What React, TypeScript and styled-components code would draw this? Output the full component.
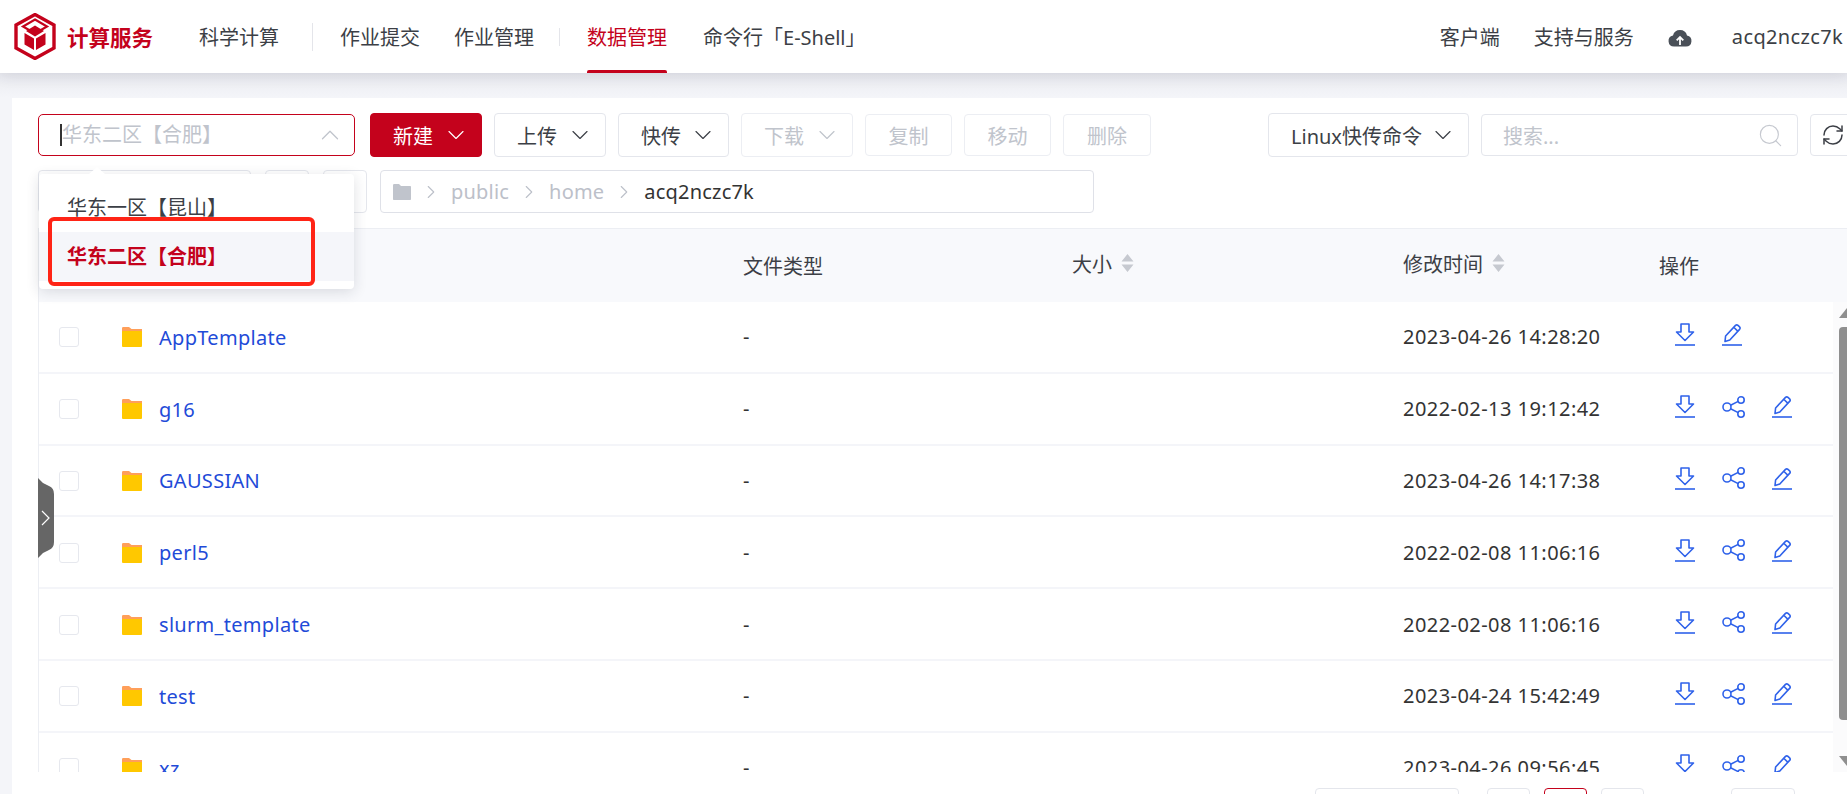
import React, { FC } from 'react';
import styled, { createGlobalStyle } from 'styled-components';
import { ChevronDown, ChevronRight, ChevronUp, RefreshCw, Search } from 'lucide-react';

const GlobalStyle = createGlobalStyle`
  html, body {
    margin: 0;
    padding: 0;
    height: 100%;
    overflow: hidden;
    background: #f4f5f9;
  }
  * {
    box-sizing: border-box;
  }
  body {
    font-family: 'Noto Sans', 'Noto Sans CJK SC', sans-serif;
    color: #333;
  }
`;

const Page = styled.div`
  position: relative;
  display: flex;
  flex-direction: column;
  height: 794px;
  overflow: hidden;
`;

/* header */
const Header = styled.header`
  display: flex;
  flex: none;
  align-items: center;
  height: 73px;
  padding: 0 4px 0 14px;
  background: #fff;
  box-shadow: 0 2px 14px rgba(40, 45, 70, 0.12);
  z-index: 1;
`;

const LogoText = styled.span`
  margin: 0 46px 0 11px;
  font-size: 21.5px;
  font-weight: 700;
  color: #c4021c;
  white-space: nowrap;
`;

const NavItem = styled.a<{ $active?: boolean }>`
  position: relative;
  display: flex;
  align-items: center;
  height: 73px;
  margin-right: ${(props) => (props.$active ? '36px' : '34px')};
  font-size: 20px;
  color: ${(props) => (props.$active ? '#c4021c' : '#3c3f46')};
  white-space: nowrap;

  ${(props) =>
    props.$active &&
    `
    &::after {
      content: '';
      position: absolute;
      left: 0;
      right: 0;
      bottom: 0;
      height: 3px;
      border-radius: 2px 2px 0 0;
      background: #c4021c;
    }
  `}
`;

const NavDivider = styled.span<{ $short?: boolean }>`
  width: 1px;
  height: ${(props) => (props.$short ? '18px' : '28px')};
  margin: ${(props) => (props.$short ? '0 27px 0 -9px' : '0 27px 0 -1px')};
  background: #e4e5ea;
`;

const HeaderRight = styled.div`
  display: flex;
  align-items: center;
  gap: 34px;
  margin-left: auto;
  font-size: 20px;
  color: #3c3f46;
  white-space: nowrap;
`;

const UserName = styled.span`
  margin-left: 6px;
  letter-spacing: 0.35px;
`;

/* card */
const Main = styled.main`
  display: flex;
  flex: 1;
  min-height: 0;
  padding: 25px 0 0 12px;
  background: linear-gradient(#e9eaef, #f4f5f9 24px);
`;

const Card = styled.section`
  flex: 1;
  min-width: 0;
  padding: 15px 0 0 26px;
  background: #fff;
`;

const ToolRow = styled.div`
  display: flex;
  align-items: center;
  height: 44px;
`;

const PathRow = styled.div`
  display: flex;
  align-items: center;
  gap: 14px;
  height: 43px;
  margin-top: 13px;
`;

const ToolButton = styled.button<{ $w: number; $disabled?: boolean }>`
  display: flex;
  flex: none;
  align-items: center;
  justify-content: center;
  width: ${(props) => props.$w}px;
  height: 42px;
  margin-right: 12px;
  padding: 0;
  border: 1px solid ${(props) => (props.$disabled ? '#eceef3' : '#e4e6ec')};
  border-radius: 4px;
  background: #fff;
  color: ${(props) => (props.$disabled ? '#c0c4cc' : '#3c3f46')};
  font: inherit;
  font-size: 20px;
  white-space: nowrap;
`;

const MenuButton = styled(ToolButton)<{ $primary?: boolean }>`
  justify-content: space-between;
  height: 44px;
  padding: 0 11px 0 22px;
  ${(props) =>
    props.$primary &&
    `
    border-color: #c4021c;
    background: #c4021c;
    color: #fff;
  `}
`;

const ButtonChevron: FC = () => <ChevronDown size={28} strokeWidth={1} />;

const ZoneSelect = styled.div`
  display: flex;
  flex: none;
  align-items: center;
  justify-content: space-between;
  width: 317px;
  height: 42px;
  margin-right: 15px;
  padding: 0 9px 0 22px;
  border: 1px solid #c4021c;
  border-radius: 5px;
  font-size: 20px;
  color: #c0c4cc;
  white-space: nowrap;
`;

const ZoneText = styled.span`
  border-left: 2px solid #333;
  line-height: 22px;
  margin-left: -1px;
`;

const SearchBox = styled.div`
  display: flex;
  flex: none;
  align-items: center;
  justify-content: space-between;
  width: 317px;
  height: 42px;
  margin-right: 12px;
  padding: 0 13px 0 21px;
  border: 1px solid #e4e6ec;
  border-radius: 4px;
  font-size: 20px;
  color: #c0c4cc;
`;

const Spacer = styled.span`
  flex: none;
  width: 105px;
`;

const RefreshButton = styled.div`
  display: flex;
  flex: none;
  align-items: center;
  width: 60px;
  height: 42px;
  padding-left: 10px;
  border: 1px solid #e4e6ec;
  border-radius: 4px;
  color: #3c3f46;
`;

const PathButton = styled.div<{ $w: number }>`
  flex: none;
  width: ${(props) => props.$w}px;
  height: 43px;
  border: 1px solid #e4e6ec;
  border-radius: 4px;
`;

const Breadcrumb = styled.div`
  display: flex;
  align-items: center;
  width: 714px;
  height: 43px;
  margin-left: -1px;
  padding-left: 12px;
  border: 1px solid #dfe1e8;
  border-radius: 4px;
  font-size: 20px;
  letter-spacing: 0.2px;
  color: #c0c4cc;
`;

const Crumb = styled.span<{ $current?: boolean }>`
  color: ${(props) => (props.$current ? '#333' : '#bcc0c9')};
`;

const CrumbArrow = styled(ChevronRight)`
  margin: 0 9px;
  color: #bcc0c9;
`;

/* table */
const TableWrap = styled.div`
  margin-top: 15px;
  border-left: 1px solid #eceef3;
`;

const HeadRow = styled.div`
  display: grid;
  grid-template-columns: 704px 329px 331px 256px 1fr;
  align-items: center;
  height: 74px;
  border-top: 1px solid #eceef3;
  background: #f8f9fc;
  font-size: 20px;
  color: #3c3f46;
`;

const HeadCell = styled.div<{ $raised?: boolean }>`
  display: flex;
  align-items: center;
  gap: 9px;
  margin-top: ${(props) => (props.$raised ? '-5px' : '0')};
`;

const BodyWrap = styled.div`
  display: flex;
  height: 470px;
  overflow: hidden;
`;

const Rows = styled.div`
  flex: none;
  width: 1794px;
`;

const Row = styled.div`
  display: grid;
  grid-template-columns: 704px 329px 331px 272px 1fr;
  align-items: center;
  height: 71.8px;
  border-bottom: 2px solid #f4f5f9;
`;

const NameCell = styled.div`
  display: flex;
  align-items: center;
  padding: 1px 0 0 20px;
`;

const CheckBox = styled.span`
  flex: none;
  width: 20px;
  height: 20px;
  margin-right: 43px;
  border: 1px solid #e6e8ee;
  border-radius: 3px;
`;

const FileName = styled.a`
  margin-left: 17px;
  font-size: 20px;
  letter-spacing: 0.3px;
  color: #1f4bd8;
`;

const Cell = styled.div`
  font-size: 20px;
  letter-spacing: 0.45px;
  color: #333;
`;

const Actions = styled.div`
  display: flex;
  align-items: center;
  gap: 27px;
  margin-top: -4px;
  color: #2f62ea;
`;

const ScrollTrack = styled.div`
  display: flex;
  flex: 1;
  flex-direction: column;
  align-items: flex-end;
  background: #fbfbfc;
`;

const ScrollUp = styled.span`
  width: 0;
  height: 0;
  margin: 6px 0 9px;
  border-left: 8px solid transparent;
  border-bottom: 10px solid #8f8f8f;
`;

const ScrollThumb = styled.span`
  width: 8px;
  height: 393px;
  flex: none;
  border-radius: 4px 0 0 4px;
  background: #8f8f8f;
`;

const ScrollDown = styled.span`
  width: 0;
  height: 0;
  margin-top: 36px;
  border-left: 8px solid transparent;
  border-top: 10px solid #8f8f8f;
`;

const Pager = styled.div`
  display: flex;
  gap: 14px;
  margin: 16px 0 0 1277px;
`;

const PagerItem = styled.span<{ $w: number; $gap?: number; $active?: boolean }>`
  flex: none;
  width: ${(props) => props.$w}px;
  height: 40px;
  margin-left: ${(props) => props.$gap ?? 0}px;
  border: 1px solid ${(props) => (props.$active ? '#c4021c' : '#e4e6ec')};
  border-radius: 4px;
`;

/* overlays */
const Dropdown = styled.div`
  position: absolute;
  top: 174px;
  left: 39px;
  width: 315px;
  padding: 9px 0 8px;
  border-radius: 4px;
  background: #fff;
  box-shadow: 0 3px 14px rgba(30, 35, 60, 0.14);

  &::before {
    content: '';
    position: absolute;
    top: -7px;
    left: 50px;
    border-left: 8px solid transparent;
    border-right: 8px solid transparent;
    border-bottom: 7px solid #fff;
  }
`;

const DropdownItem = styled.div<{ $selected?: boolean }>`
  display: flex;
  align-items: center;
  height: 49px;
  padding: 0 0 2px 28px;
  background: ${(props) => (props.$selected ? '#f5f6fa' : '#fff')};
  color: ${(props) => (props.$selected ? '#c4021c' : '#3c3f46')};
  font-size: 20px;
  font-weight: ${(props) => (props.$selected ? 700 : 400)};
  white-space: nowrap;
`;

const RedMark = styled.div`
  position: absolute;
  top: 217px;
  left: 48px;
  width: 267px;
  height: 69px;
  border: 4px solid #ff2416;
  border-radius: 6px;
`;

const SideHandle = styled.svg`
  position: absolute;
  top: 478px;
  left: 38px;
`;

/* drawings */
const Logo: FC = () => (
  <svg width="42" height="47" viewBox="0 0 42 47">
    <path
      d="M21 1.5 40 12v23L21 45.5 2 35V12Z"
      fill="none"
      stroke="#c4021c"
      strokeWidth="3.4"
      strokeLinejoin="miter"
    />
    <path d="M21 6.5 33 13.5 21 20.5 9 13.5Z" fill="#fff" stroke="#c4021c" strokeWidth="2.2" />
    <path d="M21 12.5 30 18 21 23.5 12 18Z" fill="#c4021c" />
    <path d="M10.5 20 20 25.5V37L10.5 31.5Z M31.5 20 22 25.5V37l9.5-5.5Z" fill="#c4021c" />
    <path d="M6.5 18v15l14 8M35.5 18v15l-14 8" fill="none" stroke="#fff" strokeWidth="1.6" />
  </svg>
);

const CloudIcon: FC = () => (
  <svg width="24" height="20" viewBox="0 0 24 20">
    <path
      d="M6 19.5a5.5 5.5 0 0 1-1-10.9 7.2 7.2 0 0 1 14 0 5.5 5.5 0 0 1-1 10.9Z"
      fill="#4a5058"
    />
    <path d="M12 18v-7.5M8.7 13.4 12 10l3.3 3.4" fill="none" stroke="#fff" strokeWidth="1.8" />
  </svg>
);

const SortIcon: FC = () => (
  <svg width="13" height="20" viewBox="0 0 13 20">
    <path d="M6.5 1 12.5 8.5H.5Z M6.5 19 .5 11.5h12Z" fill="#c6c9d0" />
  </svg>
);

const FolderIcon: FC = () => (
  <svg width="20" height="20" viewBox="0 0 20 20">
    <path d="M0 1.5C0 .7.5 0 1 0h6l2.5 2H20v4H0Z" fill="#ff9f5a" />
    <rect y="4" width="20" height="16" rx="1" fill="#ffc800" />
  </svg>
);

const FolderGray: FC = () => (
  <svg width="18" height="16" viewBox="0 0 18 16">
    <path d="M0 1.5C0 .7.5 0 1 0h5l2 2h9c.6 0 1 .4 1 1v12c0 .6-.4 1-1 1H1c-.6 0-1-.4-1-1Z" fill="#c0c4cc" />
  </svg>
);

const DownloadIcon: FC = () => (
  <svg width="20" height="23" viewBox="0 0 20 23" fill="none" stroke="currentColor" strokeWidth="1.6">
    <path d="M6 1h8v8h4.5L10 17.5 1.5 9H6Z" strokeLinejoin="round" />
    <path d="M0 22h20" />
  </svg>
);

const ShareIcon: FC = () => (
  <svg width="23" height="22" viewBox="0 0 23 22" fill="none" stroke="currentColor" strokeWidth="1.6">
    <circle cx="5" cy="11" r="4" />
    <circle cx="19" cy="4" r="3.2" />
    <circle cx="19" cy="18" r="3.2" />
    <path d="M8.6 9.2 16.2 5.4M8.6 12.8l7.6 3.8" />
  </svg>
);

const EditIcon: FC = () => (
  <svg width="20" height="23" viewBox="0 0 20 23" fill="none" stroke="currentColor" strokeWidth="1.6">
    <path d="M3 18.5 3.6 13 13.5 2.4a1.8 1.8 0 0 1 2.5 0l1.6 1.5a1.8 1.8 0 0 1 0 2.5L7.8 17Z" strokeLinejoin="round" />
    <path d="M12 4.5 16 8.3" />
    <path d="M0 22h20" />
  </svg>
);

const files = [
  { name: 'AppTemplate', time: '2023-04-26 14:28:20', share: false },
  { name: 'g16', time: '2022-02-13 19:12:42', share: true },
  { name: 'GAUSSIAN', time: '2023-04-26 14:17:38', share: true },
  { name: 'perl5', time: '2022-02-08 11:06:16', share: true },
  { name: 'slurm_template', time: '2022-02-08 11:06:16', share: true },
  { name: 'test', time: '2023-04-24 15:42:49', share: true },
  { name: 'xz', time: '2023-04-26 09:56:45', share: true },
];

const App: FC = () => (
  <Page>
    <GlobalStyle />
    <Header>
      <Logo />
      <LogoText>计算服务</LogoText>
      <NavItem>科学计算</NavItem>
      <NavDivider />
      <NavItem>作业提交</NavItem>
      <NavItem>作业管理</NavItem>
      <NavDivider $short />
      <NavItem $active>数据管理</NavItem>
      <NavItem>命令行「E-Shell」</NavItem>
      <HeaderRight>
        <span>客户端</span>
        <span>支持与服务</span>
        <CloudIcon />
        <UserName>acq2nczc7k</UserName>
      </HeaderRight>
    </Header>

    <Main>
      <Card>
        <ToolRow>
          <ZoneSelect>
            <ZoneText>华东二区【合肥】</ZoneText>
            <ChevronUp size={30} strokeWidth={1} color="#c0c4cc" />
          </ZoneSelect>
          <MenuButton $w={112} $primary>
            新建 <ButtonChevron />
          </MenuButton>
          <MenuButton $w={112}>
            上传 <ButtonChevron />
          </MenuButton>
          <MenuButton $w={111}>
            快传 <ButtonChevron />
          </MenuButton>
          <MenuButton $w={112} $disabled>
            下载 <ButtonChevron />
          </MenuButton>
          <ToolButton $w={87} $disabled>
            复制
          </ToolButton>
          <ToolButton $w={87} $disabled>
            移动
          </ToolButton>
          <ToolButton $w={88} $disabled>
            删除
          </ToolButton>
          <Spacer />
          <MenuButton $w={201}>
            Linux快传命令 <ButtonChevron />
          </MenuButton>
          <SearchBox>
            搜索...
            <Search size={27} strokeWidth={1} color="#c6c9d0" />
          </SearchBox>
          <RefreshButton>
            <RefreshCw size={24} strokeWidth={1.5} />
          </RefreshButton>
        </ToolRow>

        <PathRow>
          <PathButton $w={213} />
          <PathButton $w={44} />
          <PathButton $w={44} />
          <Breadcrumb>
            <FolderGray />
            <CrumbArrow size={22} strokeWidth={1.2} />
            <Crumb>public</Crumb>
            <CrumbArrow size={22} strokeWidth={1.2} />
            <Crumb>home</Crumb>
            <CrumbArrow size={22} strokeWidth={1.2} />
            <Crumb $current>acq2nczc7k</Crumb>
          </Breadcrumb>
        </PathRow>

        <TableWrap>
          <HeadRow>
            <span />
            <HeadCell>文件类型</HeadCell>
            <HeadCell $raised>
              大小 <SortIcon />
            </HeadCell>
            <HeadCell $raised>
              修改时间 <SortIcon />
            </HeadCell>
            <HeadCell>操作</HeadCell>
          </HeadRow>
          <BodyWrap>
            <Rows>
              {files.map((file) => (
                <Row key={file.name}>
                  <NameCell>
                    <CheckBox />
                    <FolderIcon />
                    <FileName>{file.name}</FileName>
                  </NameCell>
                  <Cell>-</Cell>
                  <span />
                  <Cell>{file.time}</Cell>
                  <Actions>
                    <DownloadIcon />
                    {file.share && <ShareIcon />}
                    <EditIcon />
                  </Actions>
                </Row>
              ))}
            </Rows>
            <ScrollTrack>
              <ScrollUp />
              <ScrollThumb />
              <ScrollDown />
            </ScrollTrack>
          </BodyWrap>
        </TableWrap>

        <Pager>
          <PagerItem $w={144} />
          <PagerItem $w={43} $gap={14} />
          <PagerItem $w={43} $active />
          <PagerItem $w={43} />
          <PagerItem $w={64} $gap={73} />
        </Pager>
      </Card>
    </Main>

    <Dropdown>
      <DropdownItem>华东一区【昆山】</DropdownItem>
      <DropdownItem $selected>华东二区【合肥】</DropdownItem>
    </Dropdown>
    <RedMark />
    <SideHandle width="17" height="80" viewBox="0 0 17 80">
      <path d="M0 0 5 5 11 8Q16 10 16 16V64Q16 70 11 72L5 75 0 80Z" fill="#666" />
      <path d="M4 33 11 40 4 47" fill="none" stroke="#fff" strokeWidth="1.2" />
    </SideHandle>
  </Page>
);

export default App;
